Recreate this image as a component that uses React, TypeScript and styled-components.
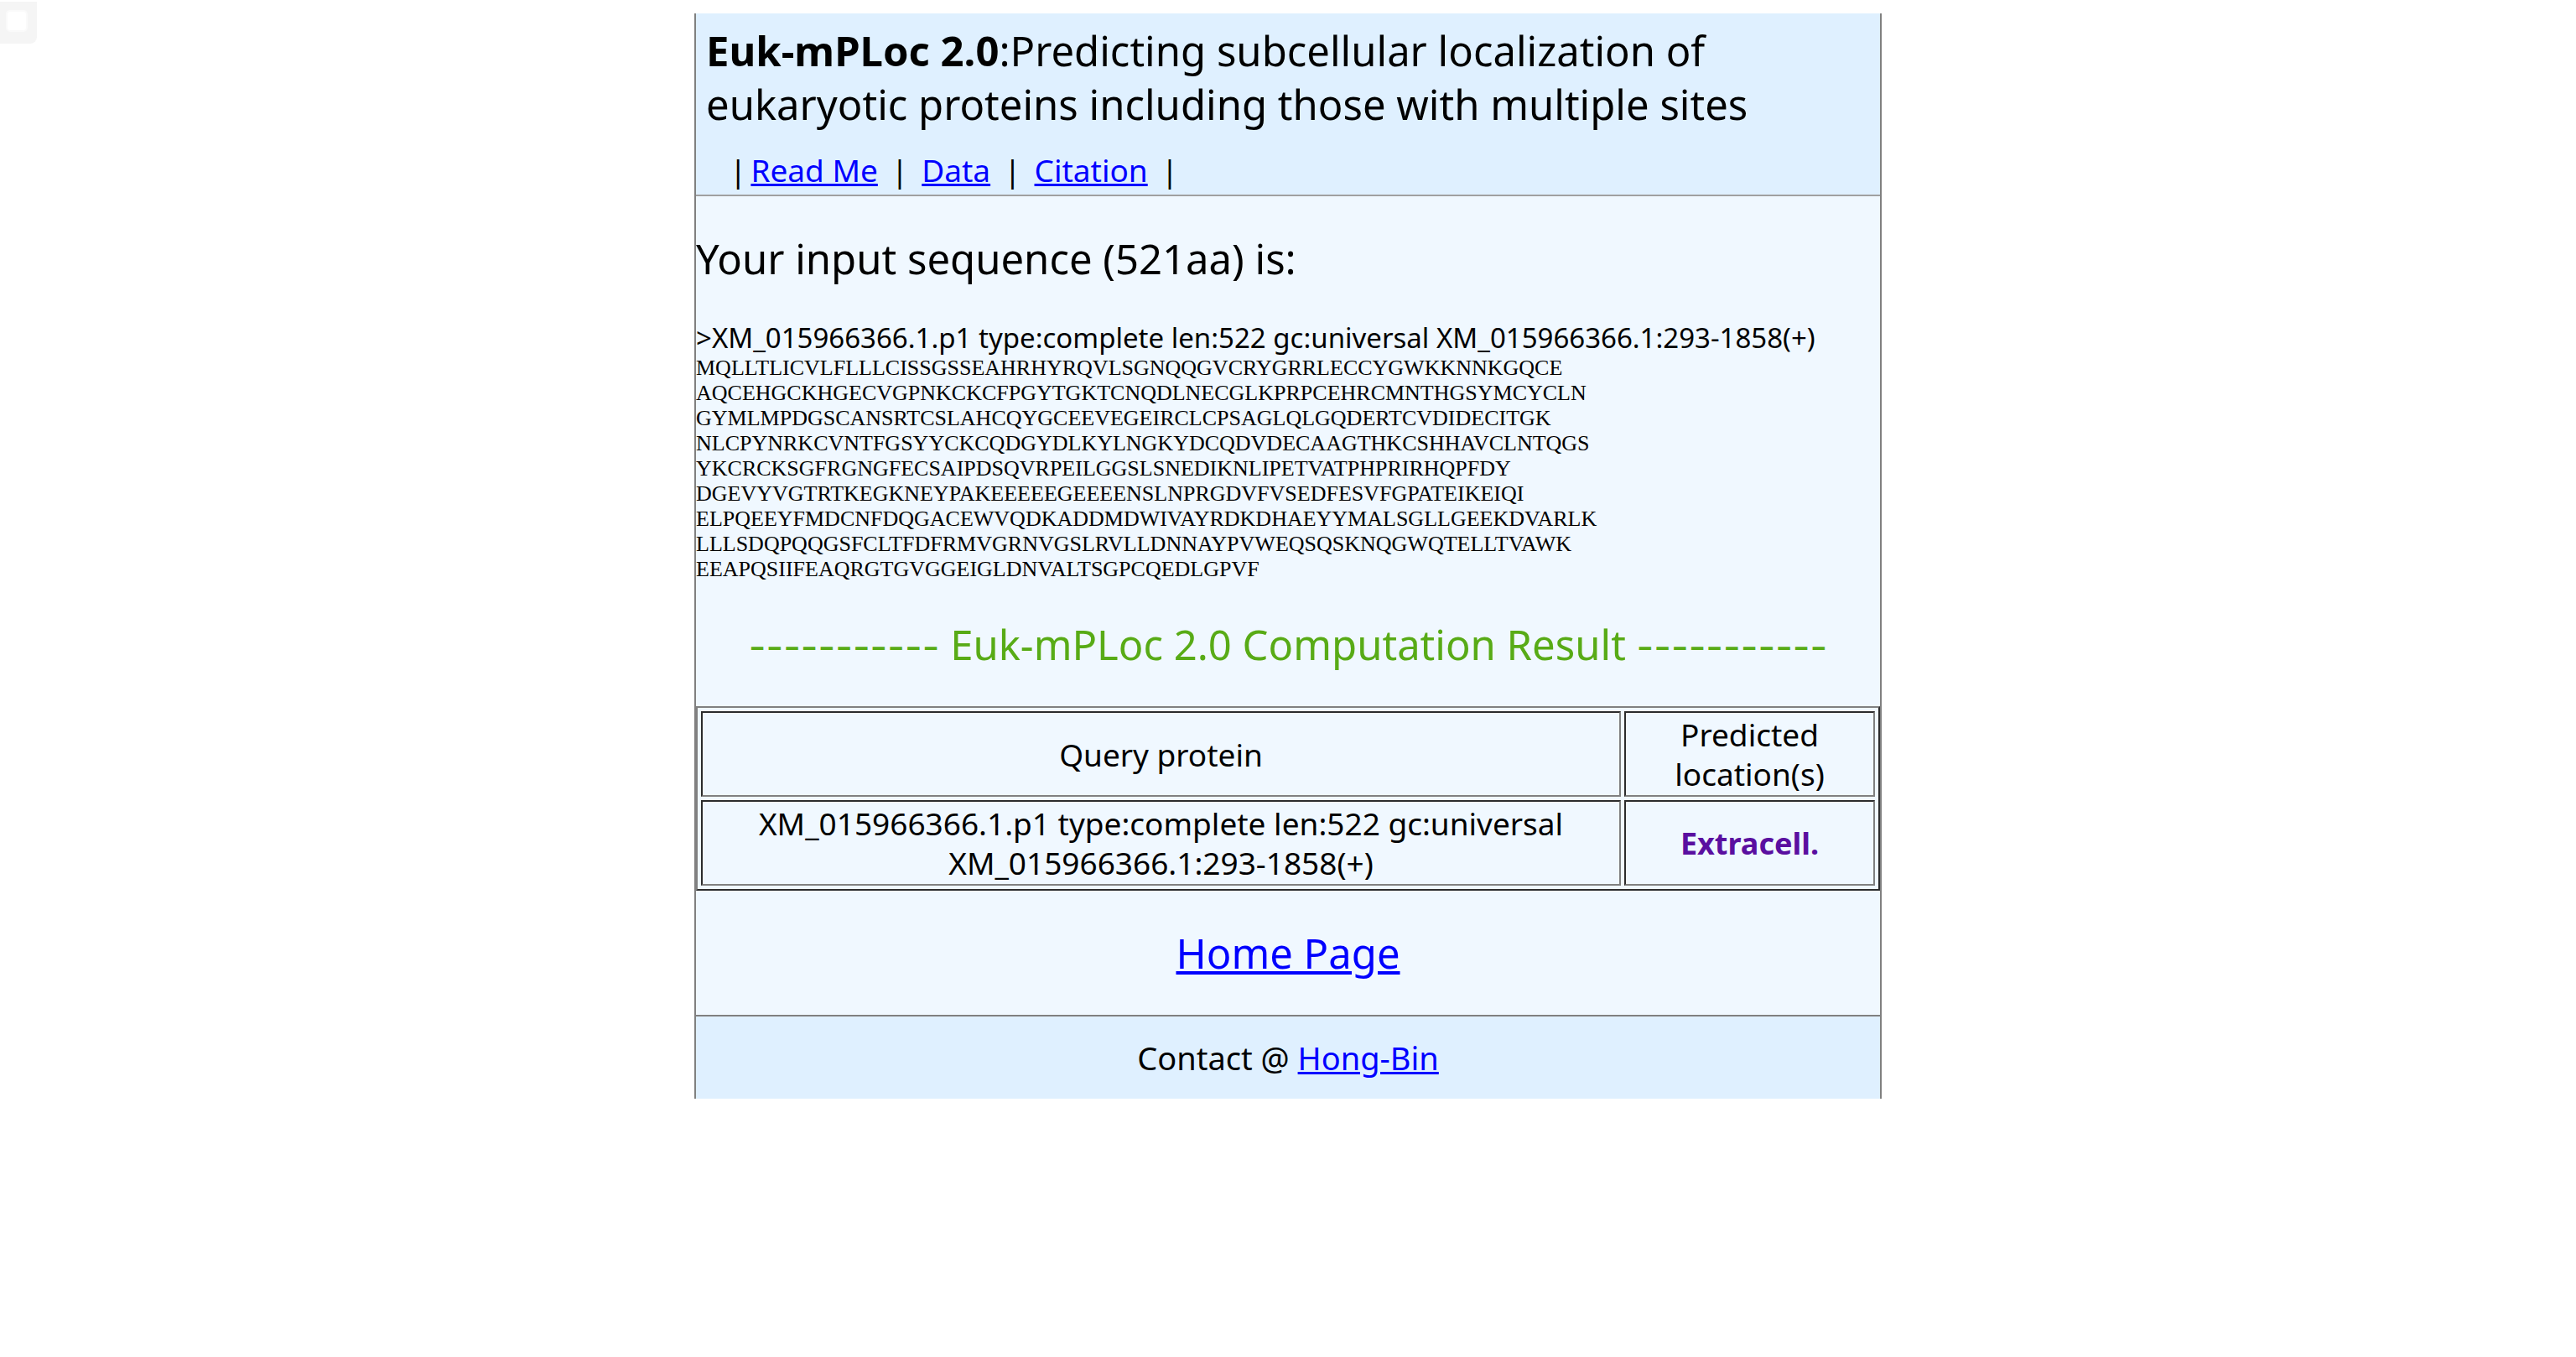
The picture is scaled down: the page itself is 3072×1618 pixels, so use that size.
import React from "react";
import styled, { createGlobalStyle } from "styled-components";

const GlobalStyle = createGlobalStyle`
  body {
    margin: 0;
    padding: 16px;
    background: #ffffff;
    color: #000000;
    font-family: "Noto Sans", "Open Sans", sans-serif;
    font-size: 37px;
    line-height: 47px;
  }
`;

const Page = styled.div`
  box-sizing: border-box;
  width: 100%;
  max-width: 1416px;
  margin: 0 auto;
  background: #f0f8ff;
  border-left: 2px solid #808080;
  border-right: 2px solid #808080;
`;

const Header = styled.header`
  padding: 12px 12px 6px;
  background: #dff0ff;
  border-bottom: 2px solid #a0a0a0;
`;

const Title = styled.h1`
  margin: 0;
  font-size: 49px;
  line-height: 64px;
  font-weight: 400;
`;

const Nav = styled.nav`
  display: flex;
  margin-top: 23px;
  padding-left: 28px;
`;

const Bar = styled.span<{ $lead?: boolean }>`
  margin: ${({ $lead }) => ($lead ? "0 5px 0 0" : "0 16px")};
`;

const Link = styled.a`
  color: #0000ff;
  text-decoration: underline;
`;

const Main = styled.main`
  display: flex;
  flex-direction: column;
  gap: 42px;
  padding: 42px 0;
`;

const Heading = styled.h2<{ $result?: boolean }>`
  margin: 0;
  font-size: 49px;
  line-height: 64px;
  font-weight: 400;
  color: ${({ $result }) => ($result ? "#58ab16" : "inherit")};
  text-align: ${({ $result }) => ($result ? "center" : "left")};
`;

const Dashes = styled.span`
  font-family: Inter, sans-serif;
  font-size: 45px;
  line-height: 1;
`;

const SequenceName = styled.p`
  margin: 0;
  font-size: 33px;
  line-height: 42px;
`;

const Residues = styled.pre`
  margin: 0;
  font-family: "Liberation Serif", "Times New Roman", serif;
  font-size: 26px;
  line-height: 30px;
`;

const ResultTable = styled.table`
  width: 100%;
  border: 2px solid;
  border-color: #808080 #2c2c2c #2c2c2c #808080;
  border-collapse: separate;
  border-spacing: 4px;
  text-align: center;

  th,
  td {
    padding: 2px;
    border: 2px solid;
    border-color: #2c2c2c #808080 #808080 #2c2c2c;
    font-weight: 400;
  }

  th:last-child {
    width: 291px;
  }
`;

const Location = styled.strong`
  color: #5a0fa0;
  font-size: 36px;
  font-weight: 700;
`;

const HomeLine = styled.p`
  margin: 0;
  font-size: 49px;
  line-height: 64px;
  text-align: center;
`;

const Footer = styled.footer`
  padding: 26px 0 25px;
  background: #dff0ff;
  border-top: 2px solid #808080;
  font-size: 38px;
  text-align: center;
`;

const CornerTab = styled.div`
  position: absolute;
  top: 2px;
  left: 0;
  display: grid;
  place-items: center;
  box-sizing: border-box;
  width: 44px;
  height: 50px;
  padding-right: 4px;
  padding-bottom: 4px;
  background: #f5f5f5;
  border-radius: 0 0 8px 0;
`;

const CornerMark = styled.span`
  width: 22px;
  height: 22px;
  background: #ffffff;
  border: 2px solid #fafafa;
  border-radius: 5px;
`;

const sequence = [
  "MQLLTLICVLFLLLCISSGSSEAHRHYRQVLSGNQQGVCRYGRRLECCYGWKKNNKGQCE",
  "AQCEHGCKHGECVGPNKCKCFPGYTGKTCNQDLNECGLKPRPCEHRCMNTHGSYMCYCLN",
  "GYMLMPDGSCANSRTCSLAHCQYGCEEVEGEIRCLCPSAGLQLGQDERTCVDIDECITGK",
  "NLCPYNRKCVNTFGSYYCKCQDGYDLKYLNGKYDCQDVDECAAGTHKCSHHAVCLNTQGS",
  "YKCRCKSGFRGNGFECSAIPDSQVRPEILGGSLSNEDIKNLIPETVATPHPRIRHQPFDY",
  "DGEVYVGTRTKEGKNEYPAKEEEEEGEEEENSLNPRGDVFVSEDFESVFGPATEIKEIQI",
  "ELPQEEYFMDCNFDQGACEWVQDKADDMDWIVAYRDKDHAEYYMALSGLLGEEKDVARLK",
  "LLLSDQPQQGSFCLTFDFRMVGRNVGSLRVLLDNNAYPVWEQSQSKNQGWQTELLTVAWK",
  "EEAPQSIIFEAQRGTGVGGEIGLDNVALTSGPCQEDLGPVF",
];

const protein =
  "XM_015966366.1.p1 type:complete len:522 gc:universal XM_015966366.1:293-1858(+)";

const navItems = ["Read Me", "Data", "Citation"];

export default function App() {
  return (
    <>
      <GlobalStyle />
      <Page>
        <Header>
          <Title>
            <b>Euk-mPLoc 2.0</b>:Predicting subcellular localization of eukaryotic
            proteins including those with multiple sites
          </Title>
          <Nav>
            <Bar $lead>|</Bar>
            {navItems.map((item) => (
              <React.Fragment key={item}>
                <Link href="#">{item}</Link>
                <Bar>|</Bar>
              </React.Fragment>
            ))}
          </Nav>
        </Header>
        <Main>
          <Heading>Your input sequence (521aa) is:</Heading>
          <section>
            <SequenceName>&gt;{protein}</SequenceName>
            <Residues>{sequence.join("\n")}</Residues>
          </section>
          <Heading $result>
            <Dashes>-----------</Dashes> Euk-mPLoc 2.0 Computation Result{" "}
            <Dashes>-----------</Dashes>
          </Heading>
          <ResultTable>
            <thead>
              <tr>
                <th scope="col">Query protein</th>
                <th scope="col">Predicted location(s)</th>
              </tr>
            </thead>
            <tbody>
              <tr>
                <td>{protein}</td>
                <td>
                  <Location>Extracell.</Location>
                </td>
              </tr>
            </tbody>
          </ResultTable>
          <HomeLine>
            <Link href="#">Home Page</Link>
          </HomeLine>
        </Main>
        <Footer>
          Contact @ <Link href="#">Hong-Bin</Link>
        </Footer>
      </Page>
      <CornerTab>
        <CornerMark />
      </CornerTab>
    </>
  );
}
